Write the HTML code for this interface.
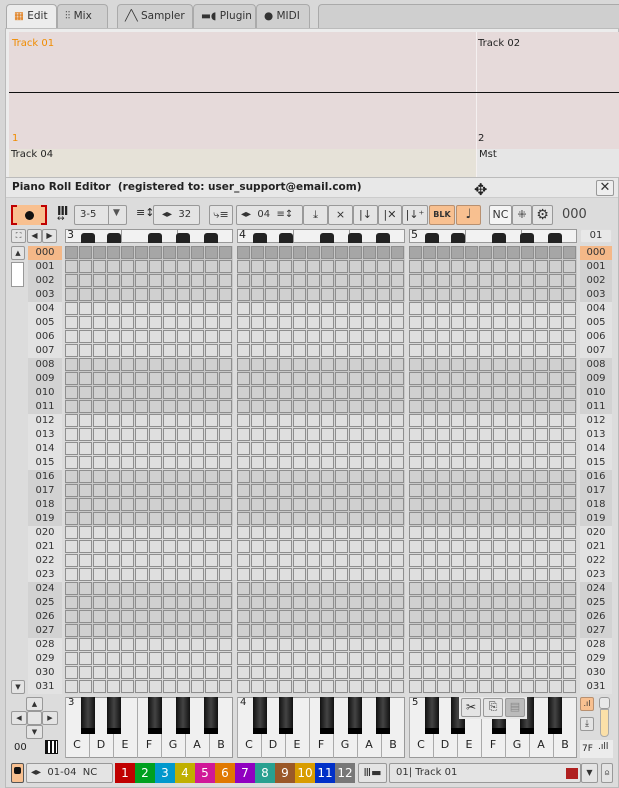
<!DOCTYPE html>
<html><head><meta charset="utf-8"><style>
*{box-sizing:border-box;margin:0;padding:0;white-space:nowrap}
body{width:619px;height:788px;overflow:hidden;background:#d6d6d6;font-family:"DejaVu Sans","Liberation Sans",sans-serif;font-size:11px;color:#222;position:relative}
.a{position:absolute}
.tab{position:absolute;top:4px;height:24px;border:1px solid #aaa;border-bottom:none;border-radius:4px 4px 0 0;background:#cfcfcf;font-size:10.5px;line-height:22px;padding-left:7px;color:#333;overflow:hidden}
.btn{position:absolute;border:1px solid #999;background:#e4e4e4;border-radius:2px;text-align:center;color:#333;overflow:hidden}
.or{background:#f8c090;border-color:#b89070}
.lbl{position:absolute;width:34px;height:14px;font-size:10px;line-height:14px;text-align:center;color:#333}
.cell{position:absolute;width:13px;height:13px;border:1px solid #8e8e8e}
</style></head><body>
<div class="a" style="left:0;top:0;width:619px;height:30px;background:#d8d8d8"></div>
<div class="tab" style="left:6px;width:51px;background:#ececec;height:25px"><span style="color:#e07000;font-weight:bold">▦</span> Edit</div>
<div class="tab" style="left:57px;width:51px">⫶⫶ Mix</div>
<div class="tab" style="left:117px;width:76px">╱╲ Sampler</div>
<div class="tab" style="left:193px;width:63px">▬◖ Plugin</div>
<div class="tab" style="left:256px;width:54px">● MIDI</div>
<div class="tab" style="left:318px;width:305px"></div>
<div class="a" style="left:5px;top:28px;width:614px;height:600px;background:#ececec;border:1px solid #bbb"></div>
<div class="a" style="left:9px;top:32px;width:610px;height:117px;background:#e6dada"></div>
<div class="a" style="left:476px;top:32px;width:1px;height:146px;background:#f4f0f0"></div>
<div class="a" style="left:9px;top:92px;width:610px;height:1px;background:#111"></div>
<div class="a" style="left:12px;top:38px;color:#f08c00;font-size:10px">Track 01</div>
<div class="a" style="left:478px;top:38px;font-size:10px">Track 02</div>
<div class="a" style="left:12px;top:133px;color:#f08c00;font-size:10px">1</div>
<div class="a" style="left:478px;top:133px;font-size:10px">2</div>
<div class="a" style="left:9px;top:149px;width:467px;height:29px;background:#e6e2d8"></div>
<div class="a" style="left:477px;top:149px;width:142px;height:29px;background:#e6e6e6"></div>
<div class="a" style="left:11px;top:149px;font-size:10px">Track 04</div>
<div class="a" style="left:479px;top:149px;font-size:10px">Mst</div>
<div class="a" style="left:5px;top:177px;width:614px;height:611px;background:#dcdcdc;border:1px solid #bbb"></div>
<div class="a" style="left:6px;top:178px;width:612px;height:20px;background:#e8e8e8;border-bottom:1px solid #ccc"></div>
<div class="a" style="left:12px;top:181px;font-weight:bold;font-size:10.5px">Piano Roll Editor&nbsp; (registered to: user_support@email.com)</div>
<div class="btn" style="left:596px;top:180px;width:18px;height:16px;line-height:13px;font-size:13px;background:#eee">✕</div>
<div class="a" style="left:474px;top:182px;font-size:16px;line-height:16px">✥</div>
<div class="a" style="left:11px;top:205px;width:36px;height:20px;background:#f8c090;border:2px solid #c00000"><div class="a" style="left:12px;top:4px;width:9px;height:9px;border-radius:50%;background:#111"></div><div class="a" style="left:4px;top:-2px;width:24px;height:2px;background:#f8c090"></div><div class="a" style="left:4px;top:16px;width:24px;height:2px;background:#f8c090"></div></div>
<div class="a" style="left:57px;top:204px;font-size:12px;font-weight:bold">Ⅲ</div>
<div class="a" style="left:57px;top:214px;font-size:9px">↔</div>
<div class="btn" style="left:74px;top:205px;width:53px;height:20px;line-height:18px;text-align:left;padding-left:5px;font-size:10px">3-5</div>
<div class="a" style="left:108px;top:206px;width:1px;height:18px;background:#999"></div>
<div class="a" style="left:113px;top:208px;font-size:9px;color:#555">▼</div>
<div class="a" style="left:136px;top:206px;font-size:11px">≡↕</div>
<div class="btn" style="left:153px;top:205px;width:47px;height:20px;line-height:18px;font-size:10px">◂▸ &nbsp;32</div>
<div class="btn" style="left:209px;top:205px;width:24px;height:20px;line-height:18px;font-size:11px">⤷≡</div>
<div class="btn" style="left:236px;top:205px;width:67px;height:20px;line-height:18px;font-size:10px;text-align:left;padding-left:4px">◂▸ &nbsp;04 &nbsp;≡↕</div>
<div class="btn" style="left:303px;top:205px;width:25px;height:20px;line-height:18px">⤓</div>
<div class="btn" style="left:328px;top:205px;width:25px;height:20px;line-height:18px">⨯</div>
<div class="btn" style="left:353px;top:205px;width:25px;height:20px;line-height:18px">|↓</div>
<div class="btn" style="left:378px;top:205px;width:24px;height:20px;line-height:18px">|✕</div>
<div class="btn" style="left:402px;top:205px;width:26px;height:20px;line-height:18px">|↓⁺</div>
<div class="btn or" style="left:429px;top:205px;width:26px;height:20px;line-height:18px;font-size:8px;font-weight:bold">BLK</div>
<div class="btn or" style="left:456px;top:205px;width:25px;height:20px;line-height:18px;font-size:13px">♩</div>
<div class="btn" style="left:489px;top:205px;width:23px;height:20px;line-height:18px;background:#f4f4f4">NC</div>
<div class="btn" style="left:512px;top:205px;width:20px;height:20px;line-height:18px">⁜</div>
<div class="btn" style="left:532px;top:205px;width:21px;height:20px;line-height:18px;font-size:14px">⚙</div>
<div class="a" style="left:562px;top:207px;font-size:13px;color:#444">000</div>
<div class="btn" style="left:11px;top:229px;width:15px;height:14px;font-size:8px;line-height:12px">⛶</div>
<div class="btn" style="left:27px;top:229px;width:15px;height:14px;font-size:8px;line-height:12px">◀</div>
<div class="btn" style="left:42px;top:229px;width:15px;height:14px;font-size:8px;line-height:12px">▶</div>
<div class="btn" style="left:580px;top:229px;width:32px;height:14px;font-size:10px;line-height:12px;background:#e8e8e8;border-color:#ddd">01</div>
<div class="btn" style="left:11px;top:246px;width:14px;height:14px;font-size:7px;line-height:12px">▲</div>
<div class="a" style="left:11px;top:262px;width:13px;height:25px;background:#fff;border:1px solid #999"></div>
<div class="btn" style="left:11px;top:680px;width:14px;height:14px;font-size:7px;line-height:12px">▼</div>
<div id="g"></div>
<div class="a" style="left:10px;top:697px;width:50px;height:42px">
<div class="btn" style="left:16px;top:0;width:17px;height:14px;font-size:7px;line-height:12px">▲</div>
<div class="btn" style="left:1px;top:14px;width:16px;height:14px;font-size:7px;line-height:12px">◀</div>
<div class="btn" style="left:17px;top:14px;width:15px;height:14px"></div>
<div class="btn" style="left:32px;top:14px;width:16px;height:14px;font-size:7px;line-height:12px">▶</div>
<div class="btn" style="left:16px;top:28px;width:17px;height:14px;font-size:7px;line-height:12px">▼</div></div>
<div class="a" style="left:14px;top:742px;font-size:10px">00</div>
<div class="a" style="left:45px;top:740px;width:13px;height:14px;border:1px solid #111;background:repeating-linear-gradient(90deg,#111 0 2px,#fff 2px 4px)"></div>
<div class="btn or" style="left:580px;top:697px;width:14px;height:14px;font-size:8px;line-height:12px">.ıl</div>
<div class="btn" style="left:580px;top:717px;width:14px;height:14px;font-size:9px;line-height:12px">⤓</div>
<div class="a" style="left:599px;top:697px;width:11px;height:12px;background:#e8e8e8;border:1px solid #999;border-radius:3px"></div>
<div class="a" style="left:600px;top:709px;width:9px;height:28px;background:#fbe0a8;border:1px solid #aaa;border-radius:0 0 4px 4px"></div>
<div class="a" style="left:580px;top:740px;width:33px;height:18px;background:#ececec"></div>
<div class="a" style="left:582px;top:744px;font-size:9px">7F</div>
<div class="a" style="left:598px;top:742px;font-size:9px">.ıll</div>
<div class="btn or" style="left:11px;top:763px;width:13px;height:20px;border-color:#555"><div class="a" style="left:2px;top:3px;width:7px;height:7px;background:#111;border-radius:2px"></div></div>
<div class="btn" style="left:26px;top:763px;width:87px;height:20px;line-height:18px;font-size:10px;text-align:left;padding-left:4px">◂▸ &nbsp;01-04 &nbsp;NC</div>
<div id="cb"></div>
<div class="btn" style="left:358px;top:763px;width:29px;height:20px;line-height:18px;font-size:11px">Ⅲ▬</div>
<div class="btn" style="left:389px;top:763px;width:192px;height:20px;line-height:18px;font-size:10px;text-align:left;padding-left:6px">01| Track 01<div class="a" style="left:176px;top:4px;width:12px;height:11px;background:#b02020"></div></div>
<div class="btn" style="left:581px;top:763px;width:17px;height:20px;font-size:8px;line-height:18px">▼</div>
<div class="btn" style="left:601px;top:763px;width:12px;height:20px;font-size:8px;line-height:18px">⍝</div>
<div class="a" style="left:459px;top:697px;width:68px;height:22px;background:#e8e8e8">
<div class="btn" style="left:2px;top:1px;width:20px;height:19px;font-size:12px;line-height:16px">✂</div>
<div class="btn" style="left:24px;top:1px;width:20px;height:19px;font-size:11px;line-height:16px">⎘</div>
<div class="btn" style="left:46px;top:1px;width:20px;height:19px;background:#bbb;color:#888;font-size:11px;line-height:16px">▤</div></div>
<script>
var g=document.getElementById('g'),h='';
var oct=[65,237,409],bk=[16,42,83,111,139],wl='CDEFGAB';
for(var r=0;r<32;r++){var y=246+r*14,sh=(Math.floor(r/4)%2==0);
 var lb=r==0?'#f4b888':(sh?'#d2d2d2':'#e2e2e2');
 var s=('00'+r).slice(-3);
 h+='<div class="lbl" style="left:28px;top:'+y+'px;background:'+lb+'">'+s+'</div>';
 h+='<div class="lbl" style="left:580px;width:32px;top:'+y+'px;background:'+lb+'">'+s+'</div>';
 var f=r==0?'#a6a6a6':(sh?'#d0d0d0':'#dfdfdf');
 for(var o=0;o<3;o++){
  h+='<div class="a" style="left:'+oct[o]+'px;top:'+y+'px;width:168px;height:14px;background:'+(sh?'#c8c8c8':'#d8d8d8')+'"></div>';
  for(var c=0;c<12;c++)h+='<div class="cell" style="left:'+(oct[o]+c*14)+'px;top:'+y+'px;background:'+f+'"></div>';}
}
for(var o=0;o<3;o++){var x=oct[o];
 h+='<div class="a" style="left:'+x+'px;top:229px;width:168px;height:14px;background:#f2f2f2;border:1px solid #999"></div>';
 h+='<div class="a" style="left:'+(x+2)+'px;top:228px;font-size:11px">'+(3+o)+'</div>';
 h+='<div class="a" style="left:'+(x+56)+'px;top:229px;width:1px;height:14px;background:#999"></div><div class="a" style="left:'+(x+112)+'px;top:229px;width:1px;height:14px;background:#999"></div>';
 h+='<div class="a" style="left:'+x+'px;top:697px;width:168px;height:61px;background:#f0f0f0;border:1px solid #999"></div>';
 for(var w=0;w<7;w++){h+='<div class="a" style="left:'+(x+w*24)+'px;top:697px;width:1px;height:61px;background:#aaa"></div><div class="a" style="left:'+(x+w*24)+'px;top:738px;width:24px;text-align:center;font-size:11px">'+wl[w]+'</div>';}
 h+='<div class="a" style="left:'+(x+3)+'px;top:697px;font-size:10px">'+(3+o)+'</div>';
 for(var b=0;b<5;b++){var bx=x+bk[b];
  h+='<div class="a" style="left:'+bx+'px;top:233px;width:14px;height:10px;background:#222;border-radius:3px 3px 0 0"></div>';
  h+='<div class="a" style="left:'+bx+'px;top:697px;width:14px;height:37px;background:linear-gradient(90deg,#111,#444 50%,#111);border-bottom:6px solid #000"></div>';}
}
g.innerHTML=h;
var cols=['#c00000','#00a020','#0098cc','#c0b000','#d01898','#e07800','#9000c0','#28a090','#9a5828','#d89c00','#0030c8','#787878'],c2='';
for(var i=0;i<12;i++)c2+='<div class="a" style="left:'+(115+i*20)+'px;top:763px;width:20px;height:20px;background:'+cols[i]+';color:#fff;text-align:center;font-size:12px;line-height:20px">'+(i+1)+'</div>';
document.getElementById('cb').innerHTML=c2;
</script>
</body></html>
